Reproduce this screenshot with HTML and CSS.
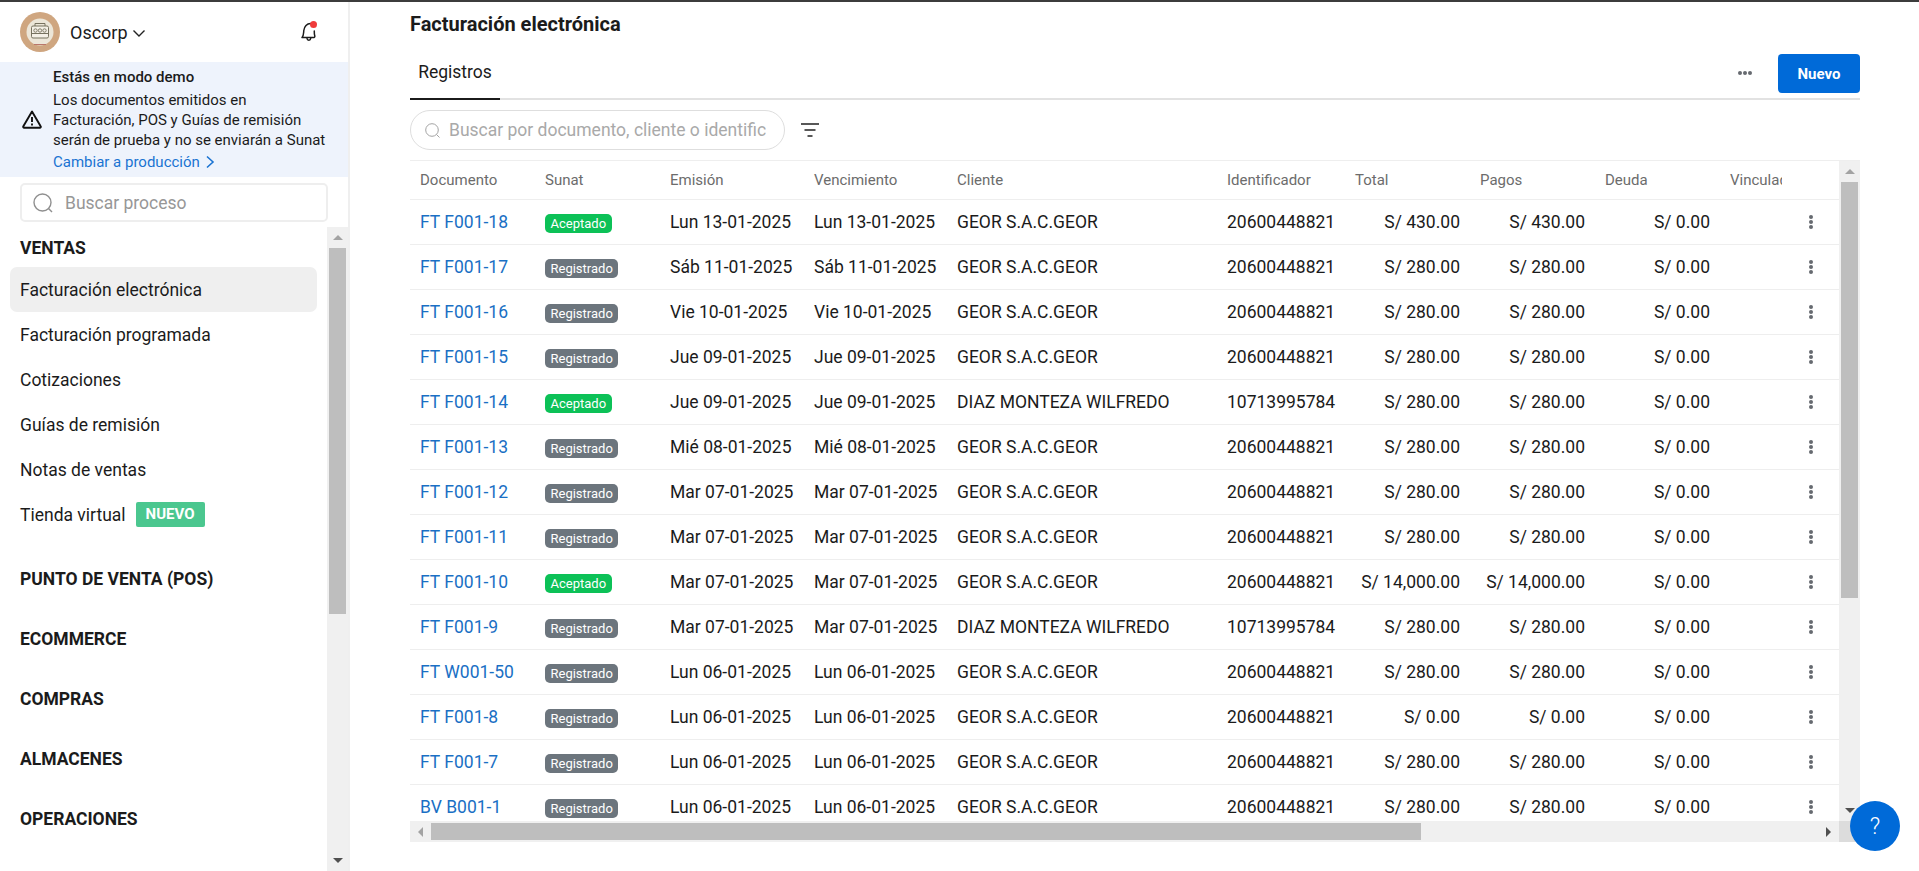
FILE: index.html
```html
<!DOCTYPE html>
<html>
<head>
<meta charset="utf-8" />
<title>Facturación electrónica</title>
<link rel="stylesheet" href="styles.css">
</head>
<body>
<div class="app">

<aside class="sidebar">
  <div class="company">
    <div class="avatar">
      <svg width="40" height="40" viewBox="0 0 40 40">
        <circle cx="20" cy="20" r="20" fill="#cfa680"/>
        <circle cx="20" cy="20" r="13.500" fill="#ece6d8"/>
        <path d="M14 32.500h12" stroke="#b9766a" stroke-width="1"/>
        <rect x="11.500" y="14" width="17" height="12" rx="1.500" fill="#f4f0e6" stroke="#77725f" stroke-width="1"/>
        <path d="M15 14v-2.500h10V14M11.500 21.500h17" fill="none" stroke="#77725f" stroke-width="1"/>
        <circle cx="15.500" cy="18.500" r="1.700" fill="none" stroke="#77725f" stroke-width=".9"/>
        <circle cx="20" cy="18.500" r="1.700" fill="none" stroke="#77725f" stroke-width=".9"/>
        <circle cx="24.500" cy="18.500" r="1.700" fill="none" stroke="#77725f" stroke-width=".9"/>
      </svg>
    </div>
    <span class="company-name">Oscorp</span>
    <svg class="chevron" width="14" height="14" viewBox="0 0 14 14"><path d="M1.500 4.500L7 10l5.500-5.500" fill="none" stroke="#222" stroke-width="1.400"/></svg>
    <div class="bell">
      <svg width="20" height="24" viewBox="0 0 20 24"><path d="M3 17.500c1.800-1.500 1.500-4 1.800-7C5.200 6.500 8 3.500 11.500 3.500M3 17.500h12c.8-.2 1-1 .7-2-.5-1.500-.4-3-.4-4.500M8 18.500c.3 2.300 3.400 2.300 3.700 0" fill="none" stroke="#1b1b1b" stroke-width="1.500" stroke-linecap="round" stroke-linejoin="round"/></svg>
      <span class="bell-dot"></span>
    </div>
  </div>

  <div class="demo">
    <svg class="demo-icon" width="20" height="19" viewBox="0 0 20 19"><path d="M10 1.500L1.500 16a1 1 0 0 0 .9 1.700h15.200a1 1 0 0 0 .9-1.700z" fill="none" stroke="#111" stroke-width="1.900" stroke-linejoin="round"/><path d="M10 7v5M10 13.600v1.800" stroke="#111" stroke-width="1.900"/></svg>
    <div class="demo-text">
      <div class="demo-title">Estás en modo demo</div>
      <div>Los documentos emitidos en</div>
      <div>Facturación, POS y Guías de remisión</div>
      <div>serán de prueba y no se enviarán a Sunat</div>
      <a class="demo-link" href="#">Cambiar a producción
        <svg width="12" height="14" viewBox="0 0 12 14"><path d="M3 1.500L9 7l-6 5.500" fill="none" stroke="#1a73d2" stroke-width="1.600"/></svg>
      </a>
    </div>
  </div>

  <div class="process-search">
    <svg width="20" height="20" viewBox="0 0 20 20"><circle cx="9.500" cy="9.500" r="8.500" fill="none" stroke="#8f8f8f" stroke-width="1.400"/><path d="M15.500 15.500l3.500 3.500" stroke="#8f8f8f" stroke-width="1.400"/></svg>
    <input type="text" placeholder="Buscar proceso">
  </div>

  <div class="nav-wrap">
    <nav class="nav">
      <div class="nav-head first">VENTAS</div>
      <a class="nav-item active" href="#">Facturación electrónica</a>
      <a class="nav-item" href="#">Facturación programada</a>
      <a class="nav-item" href="#">Cotizaciones</a>
      <a class="nav-item" href="#">Guías de remisión</a>
      <a class="nav-item" href="#">Notas de ventas</a>
      <a class="nav-item" href="#">Tienda virtual <span class="tag-new">NUEVO</span></a>
      <div class="nav-head">PUNTO DE VENTA (POS)</div>
      <div class="nav-head">ECOMMERCE</div>
      <div class="nav-head">COMPRAS</div>
      <div class="nav-head">ALMACENES</div>
      <div class="nav-head">OPERACIONES</div>
    </nav>
    <div class="vbar side-bar">
      <span class="arrow up"></span>
      <div class="side-thumb"></div>
      <span class="arrow down"></span>
    </div>
  </div>
</aside>

<main class="main">
  <h1 class="page-title">Facturación electrónica</h1>

  <div class="tabs">
    <a class="tab" href="#">Registros</a>
    <div class="tab-actions">
      <span class="more"><i></i><i></i><i></i></span>
      <button class="btn-new">Nuevo</button>
    </div>
  </div>

  <div class="filters">
    <div class="doc-search">
      <svg width="15" height="15" viewBox="0 0 15 15"><circle cx="7" cy="7" r="6.300" fill="none" stroke="#a3a3a3" stroke-width="1"/><path d="M11.500 11.500l3 3" stroke="#a3a3a3" stroke-width="1"/></svg>
      <input type="text" placeholder="Buscar por documento, cliente o identificador">
    </div>
    <svg class="filter-icon" width="18" height="14" viewBox="0 0 18 14"><path d="M0 1h18M3.500 7h11M6.500 13h5" stroke="#222" stroke-width="1.500"/></svg>
  </div>

  <div class="grid-box">
    <div class="table-view">
      <table class="docs">
        <colgroup>
          <col class="c-doc"><col class="c-sunat"><col class="c-emi"><col class="c-ven"><col class="c-cli"><col class="c-ide"><col class="c-mon"><col class="c-mon"><col class="c-mon"><col class="c-vin"><col class="c-act">
        </colgroup>
        <thead>
          <tr><th>Documento</th><th>Sunat</th><th>Emisión</th><th>Vencimiento</th><th>Cliente</th><th>Identificador</th><th>Total</th><th>Pagos</th><th>Deuda</th><th>Vinculado</th><th></th></tr>
        </thead>
        <tbody id="rows">
          <tr><td><a href="#">FT F001-18</a></td><td><span class="badge ok">Aceptado</span></td><td>Lun 13-01-2025</td><td>Lun 13-01-2025</td><td>GEOR S.A.C.GEOR</td><td>20600448821</td><td class="num">S/ 430.00</td><td class="num">S/ 430.00</td><td class="num">S/ 0.00</td><td></td><td class="act"><span class="kebab"><i></i><i></i><i></i></span></td></tr>
          <tr><td><a href="#">FT F001-17</a></td><td><span class="badge reg">Registrado</span></td><td>Sáb 11-01-2025</td><td>Sáb 11-01-2025</td><td>GEOR S.A.C.GEOR</td><td>20600448821</td><td class="num">S/ 280.00</td><td class="num">S/ 280.00</td><td class="num">S/ 0.00</td><td></td><td class="act"><span class="kebab"><i></i><i></i><i></i></span></td></tr>
          <tr><td><a href="#">FT F001-16</a></td><td><span class="badge reg">Registrado</span></td><td>Vie 10-01-2025</td><td>Vie 10-01-2025</td><td>GEOR S.A.C.GEOR</td><td>20600448821</td><td class="num">S/ 280.00</td><td class="num">S/ 280.00</td><td class="num">S/ 0.00</td><td></td><td class="act"><span class="kebab"><i></i><i></i><i></i></span></td></tr>
          <tr><td><a href="#">FT F001-15</a></td><td><span class="badge reg">Registrado</span></td><td>Jue 09-01-2025</td><td>Jue 09-01-2025</td><td>GEOR S.A.C.GEOR</td><td>20600448821</td><td class="num">S/ 280.00</td><td class="num">S/ 280.00</td><td class="num">S/ 0.00</td><td></td><td class="act"><span class="kebab"><i></i><i></i><i></i></span></td></tr>
          <tr><td><a href="#">FT F001-14</a></td><td><span class="badge ok">Aceptado</span></td><td>Jue 09-01-2025</td><td>Jue 09-01-2025</td><td>DIAZ MONTEZA WILFREDO</td><td>10713995784</td><td class="num">S/ 280.00</td><td class="num">S/ 280.00</td><td class="num">S/ 0.00</td><td></td><td class="act"><span class="kebab"><i></i><i></i><i></i></span></td></tr>
          <tr><td><a href="#">FT F001-13</a></td><td><span class="badge reg">Registrado</span></td><td>Mié 08-01-2025</td><td>Mié 08-01-2025</td><td>GEOR S.A.C.GEOR</td><td>20600448821</td><td class="num">S/ 280.00</td><td class="num">S/ 280.00</td><td class="num">S/ 0.00</td><td></td><td class="act"><span class="kebab"><i></i><i></i><i></i></span></td></tr>
          <tr><td><a href="#">FT F001-12</a></td><td><span class="badge reg">Registrado</span></td><td>Mar 07-01-2025</td><td>Mar 07-01-2025</td><td>GEOR S.A.C.GEOR</td><td>20600448821</td><td class="num">S/ 280.00</td><td class="num">S/ 280.00</td><td class="num">S/ 0.00</td><td></td><td class="act"><span class="kebab"><i></i><i></i><i></i></span></td></tr>
          <tr><td><a href="#">FT F001-11</a></td><td><span class="badge reg">Registrado</span></td><td>Mar 07-01-2025</td><td>Mar 07-01-2025</td><td>GEOR S.A.C.GEOR</td><td>20600448821</td><td class="num">S/ 280.00</td><td class="num">S/ 280.00</td><td class="num">S/ 0.00</td><td></td><td class="act"><span class="kebab"><i></i><i></i><i></i></span></td></tr>
          <tr><td><a href="#">FT F001-10</a></td><td><span class="badge ok">Aceptado</span></td><td>Mar 07-01-2025</td><td>Mar 07-01-2025</td><td>GEOR S.A.C.GEOR</td><td>20600448821</td><td class="num">S/ 14,000.00</td><td class="num">S/ 14,000.00</td><td class="num">S/ 0.00</td><td></td><td class="act"><span class="kebab"><i></i><i></i><i></i></span></td></tr>
          <tr><td><a href="#">FT F001-9</a></td><td><span class="badge reg">Registrado</span></td><td>Mar 07-01-2025</td><td>Mar 07-01-2025</td><td>DIAZ MONTEZA WILFREDO</td><td>10713995784</td><td class="num">S/ 280.00</td><td class="num">S/ 280.00</td><td class="num">S/ 0.00</td><td></td><td class="act"><span class="kebab"><i></i><i></i><i></i></span></td></tr>
          <tr><td><a href="#">FT W001-50</a></td><td><span class="badge reg">Registrado</span></td><td>Lun 06-01-2025</td><td>Lun 06-01-2025</td><td>GEOR S.A.C.GEOR</td><td>20600448821</td><td class="num">S/ 280.00</td><td class="num">S/ 280.00</td><td class="num">S/ 0.00</td><td></td><td class="act"><span class="kebab"><i></i><i></i><i></i></span></td></tr>
          <tr><td><a href="#">FT F001-8</a></td><td><span class="badge reg">Registrado</span></td><td>Lun 06-01-2025</td><td>Lun 06-01-2025</td><td>GEOR S.A.C.GEOR</td><td>20600448821</td><td class="num">S/ 0.00</td><td class="num">S/ 0.00</td><td class="num">S/ 0.00</td><td></td><td class="act"><span class="kebab"><i></i><i></i><i></i></span></td></tr>
          <tr><td><a href="#">FT F001-7</a></td><td><span class="badge reg">Registrado</span></td><td>Lun 06-01-2025</td><td>Lun 06-01-2025</td><td>GEOR S.A.C.GEOR</td><td>20600448821</td><td class="num">S/ 280.00</td><td class="num">S/ 280.00</td><td class="num">S/ 0.00</td><td></td><td class="act"><span class="kebab"><i></i><i></i><i></i></span></td></tr>
          <tr><td><a href="#">BV B001-1</a></td><td><span class="badge reg">Registrado</span></td><td>Lun 06-01-2025</td><td>Lun 06-01-2025</td><td>GEOR S.A.C.GEOR</td><td>20600448821</td><td class="num">S/ 280.00</td><td class="num">S/ 280.00</td><td class="num">S/ 0.00</td><td></td><td class="act"><span class="kebab"><i></i><i></i><i></i></span></td></tr>
        </tbody>
      </table>
    </div>
    <div class="vbar table-vbar">
      <span class="arrow up"></span>
      <div class="table-vthumb"></div>
      <span class="arrow down"></span>
    </div>
    <div class="hbar">
      <span class="arrow left"></span>
      <div class="table-hthumb"></div>
      <span class="arrow right"></span>
    </div>
    <div class="corner"></div>
  </div>
</main>

</div>
<button class="help">?</button>
</body>
</html>
```

FILE: styles.css
```css
* {
  box-sizing: border-box;
  margin: 0;
  padding: 0;
}
html, body {
  height: 871px;
  overflow: hidden;
}
body {
  background: #fff;
  border-top: 2px solid #3c3c3c;
  color: #1b1b1b;
  font-family: Roboto, "Liberation Sans", sans-serif;
}
a {
  text-decoration: none;
}
input {
  background: transparent;
  border: 0 none;
  font-family: inherit;
  outline: 0 none;
}
.app {
  display: flex;
  height: 869px;
}

/* sidebar */
.sidebar {
  border-right: 2px solid #efefef;
  display: flex;
  flex-direction: column;
  flex: 0 0 350px;
}
.company {
  align-items: center;
  display: flex;
  flex: 0 0 60px;
  padding: 0 29px 0 20px;
}
.avatar {
  height: 40px;
  margin-right: 10px;
  width: 40px;
}
.company-name {
  font-size: 18px;
  margin-right: 4px;
}
.chevron {
  margin-top: 1px;
}
.bell {
  height: 24px;
  margin-left: auto;
  position: relative;
  width: 20px;
}
.bell-dot {
  background: #ef3b3b;
  border-radius: 50%;
  height: 7px;
  position: absolute;
  right: 2px;
  top: 1px;
  width: 7px;
}
.demo {
  align-items: center;
  background: #eef3fc;
  display: flex;
  flex: 0 0 115px;
  font-size: 15px;
  line-height: 20px;
  padding-left: 22px;
}
.demo-icon {
  flex: none;
  margin-right: 11px;
}
.demo-title {
  font-weight: 500;
  margin-bottom: 3px;
}
.demo-link {
  align-items: center;
  color: #1a73d2;
  display: flex;
  gap: 4px;
  margin-top: 2px;
}
.process-search {
  align-items: center;
  border: 2px solid #eeeeee;
  border-radius: 5px;
  display: flex;
  flex: 0 0 39px;
  margin: 6px 20px 0;
  padding-left: 11px;
}
.process-search input {
  flex: 1;
  font-size: 17.500px;
  margin-left: 12px;
  min-width: 0;
}
.process-search input::placeholder {
  color: #979797;
  opacity: 1;
}
.nav-wrap {
  display: flex;
  flex: 1;
  margin-top: 5px;
  min-height: 0;
}
.nav {
  flex: 1;
  overflow: hidden;
  padding: 6px 10px 0;
}
.nav-head {
  font-size: 17.500px;
  font-weight: 700;
  height: 60px;
  line-height: 60px;
  padding-left: 10px;
}
.nav-head.first {
  height: 34px;
  line-height: 30px;
}
.nav-item {
  align-items: center;
  border-radius: 7px;
  color: #1b1b1b;
  display: flex;
  font-size: 17.500px;
  height: 45px;
  padding-left: 10px;
}
.nav-item.active {
  background: #efefef;
}
.nav-item:last-of-type {
  margin-bottom: 12px;
}
.tag-new {
  background: #4bc78f;
  border-radius: 2px;
  color: #fff;
  font-size: 15px;
  font-weight: 700;
  line-height: 25px;
  margin-left: 10px;
  padding: 0 10px;
}

/* scrollbars */
.vbar {
  align-items: center;
  background: #f0f0f0;
  display: flex;
  flex-direction: column;
  justify-content: space-between;
}
.arrow {
  border-style: solid;
  display: block;
  flex: none;
  height: 0;
  width: 0;
}
.arrow.up {
  border-color: transparent transparent #a3a3a3;
  border-width: 0 5px 5px;
  margin: 8px 0;
}
.arrow.down {
  border-color: #505050 transparent transparent;
  border-width: 5px 5px 0;
  margin: 8px 0;
}
.arrow.left {
  border-color: transparent #a3a3a3 transparent transparent;
  border-width: 5px 5px 5px 0;
  margin: 0 8px;
}
.arrow.right {
  border-color: transparent transparent transparent #505050;
  border-width: 5px 0 5px 5px;
  margin: 0 8px;
}
.side-bar {
  flex: 0 0 21px;
}
.side-thumb {
  background: #bebebe;
  flex: 0 0 366px;
  margin-bottom: auto;
  width: 17px;
}

/* main area */
.main {
  display: flex;
  flex-direction: column;
  flex: 1;
  min-width: 0;
  padding: 0 59px 0 60px;
}
.page-title {
  font-size: 20px;
  font-weight: 700;
  line-height: 44px;
}
.tabs {
  align-items: flex-start;
  border-bottom: 2px solid #e2e2e2;
  display: flex;
  height: 54px;
  justify-content: space-between;
  padding-top: 8px;
}
.tab {
  border-bottom: 2px solid #1b1b1b;
  color: #1b1b1b;
  font-size: 17.500px;
  height: 46px;
  line-height: 36px;
  text-align: center;
  width: 90px;
}
.tab-actions {
  align-items: center;
  display: flex;
  gap: 26px;
}
.more {
  display: flex;
  gap: 1px;
  margin-top: -1px;
}
.more i {
  background: #666a70;
  border-radius: 50%;
  display: block;
  height: 4px;
  width: 4px;
}
.btn-new {
  background: #006ad8;
  border: 0 none;
  border-radius: 4px;
  color: #fff;
  font-family: inherit;
  font-size: 15px;
  font-weight: 700;
  height: 39px;
  width: 82px;
}
.filters {
  align-items: center;
  display: flex;
  flex: none;
  height: 60px;
}
.doc-search {
  align-items: center;
  border: 1px solid #dedede;
  border-radius: 20px;
  display: flex;
  height: 40px;
  padding: 0 18px 0 14px;
  width: 375px;
}
.doc-search input {
  flex: 1;
  font-size: 17.500px;
  margin-left: 9px;
  min-width: 0;
}
.doc-search input::placeholder {
  color: #a9a9a9;
  opacity: 1;
}
.filter-icon {
  margin-left: 16px;
}

/* table */
.grid-box {
  border-top: 1px solid #eeeeee;
  display: grid;
  flex: none;
  grid-template-columns: 1429px 21px;
  grid-template-rows: 660px 21px;
  width: 1450px;
}
.table-view {
  overflow: hidden;
}
.docs {
  border-collapse: collapse;
  table-layout: fixed;
  width: 1429px;
}
.c-doc, .c-sunat, .c-mon {
  width: 125px;
}
.c-emi {
  width: 144px;
}
.c-ven {
  width: 143px;
}
.c-cli {
  width: 270px;
}
.c-ide {
  width: 128px;
}
.c-vin {
  width: 62px;
}
.c-act {
  width: 57px;
}
.docs th {
  border-bottom: 1px solid #eeeeee;
  color: #6c6c6c;
  font-size: 15px;
  font-weight: 400;
  height: 38px;
  overflow: hidden;
  padding: 0 0 0 10px;
  text-align: left;
  white-space: nowrap;
}
.docs td {
  border-bottom: 1px solid #eeeeee;
  font-size: 17.500px;
  height: 45px;
  overflow: hidden;
  padding: 0 10px;
  white-space: nowrap;
}
.docs td a {
  color: #1a6fc4;
}
.docs td.num {
  text-align: right;
}
.docs td.act {
  padding: 0;
}
.badge {
  border-radius: 5px;
  color: #fff;
  display: inline-block;
  font-size: 13px;
  line-height: 19px;
  padding: 0 5.500px;
  vertical-align: -2px;
}
.badge.ok {
  background: #0cc157;
}
.badge.reg {
  background: #6c757d;
}
.kebab {
  display: flex;
  flex-direction: column;
  gap: 1px;
  margin-left: 27px;
  width: 4px;
}
.kebab i {
  background: #666a70;
  border-radius: 50%;
  display: block;
  height: 4px;
  width: 4px;
}
.table-vbar .table-vthumb {
  background: #bebebe;
  flex: 0 0 416px;
  margin-bottom: auto;
  width: 17px;
}
.hbar {
  align-items: center;
  background: #f0f0f0;
  display: flex;
}
.table-hthumb {
  background: #bebebe;
  flex: 0 0 990px;
  height: 17px;
  margin-right: auto;
}
.corner {
  background: #dcdcdc;
}
.help {
  background: #006ad8;
  border: 0 none;
  border-radius: 50%;
  bottom: 20px;
  color: #fff;
  font-family: inherit;
  font-size: 23px;
  font-weight: 300;
  height: 50px;
  position: fixed;
  right: 19px;
  width: 50px;
}
```
